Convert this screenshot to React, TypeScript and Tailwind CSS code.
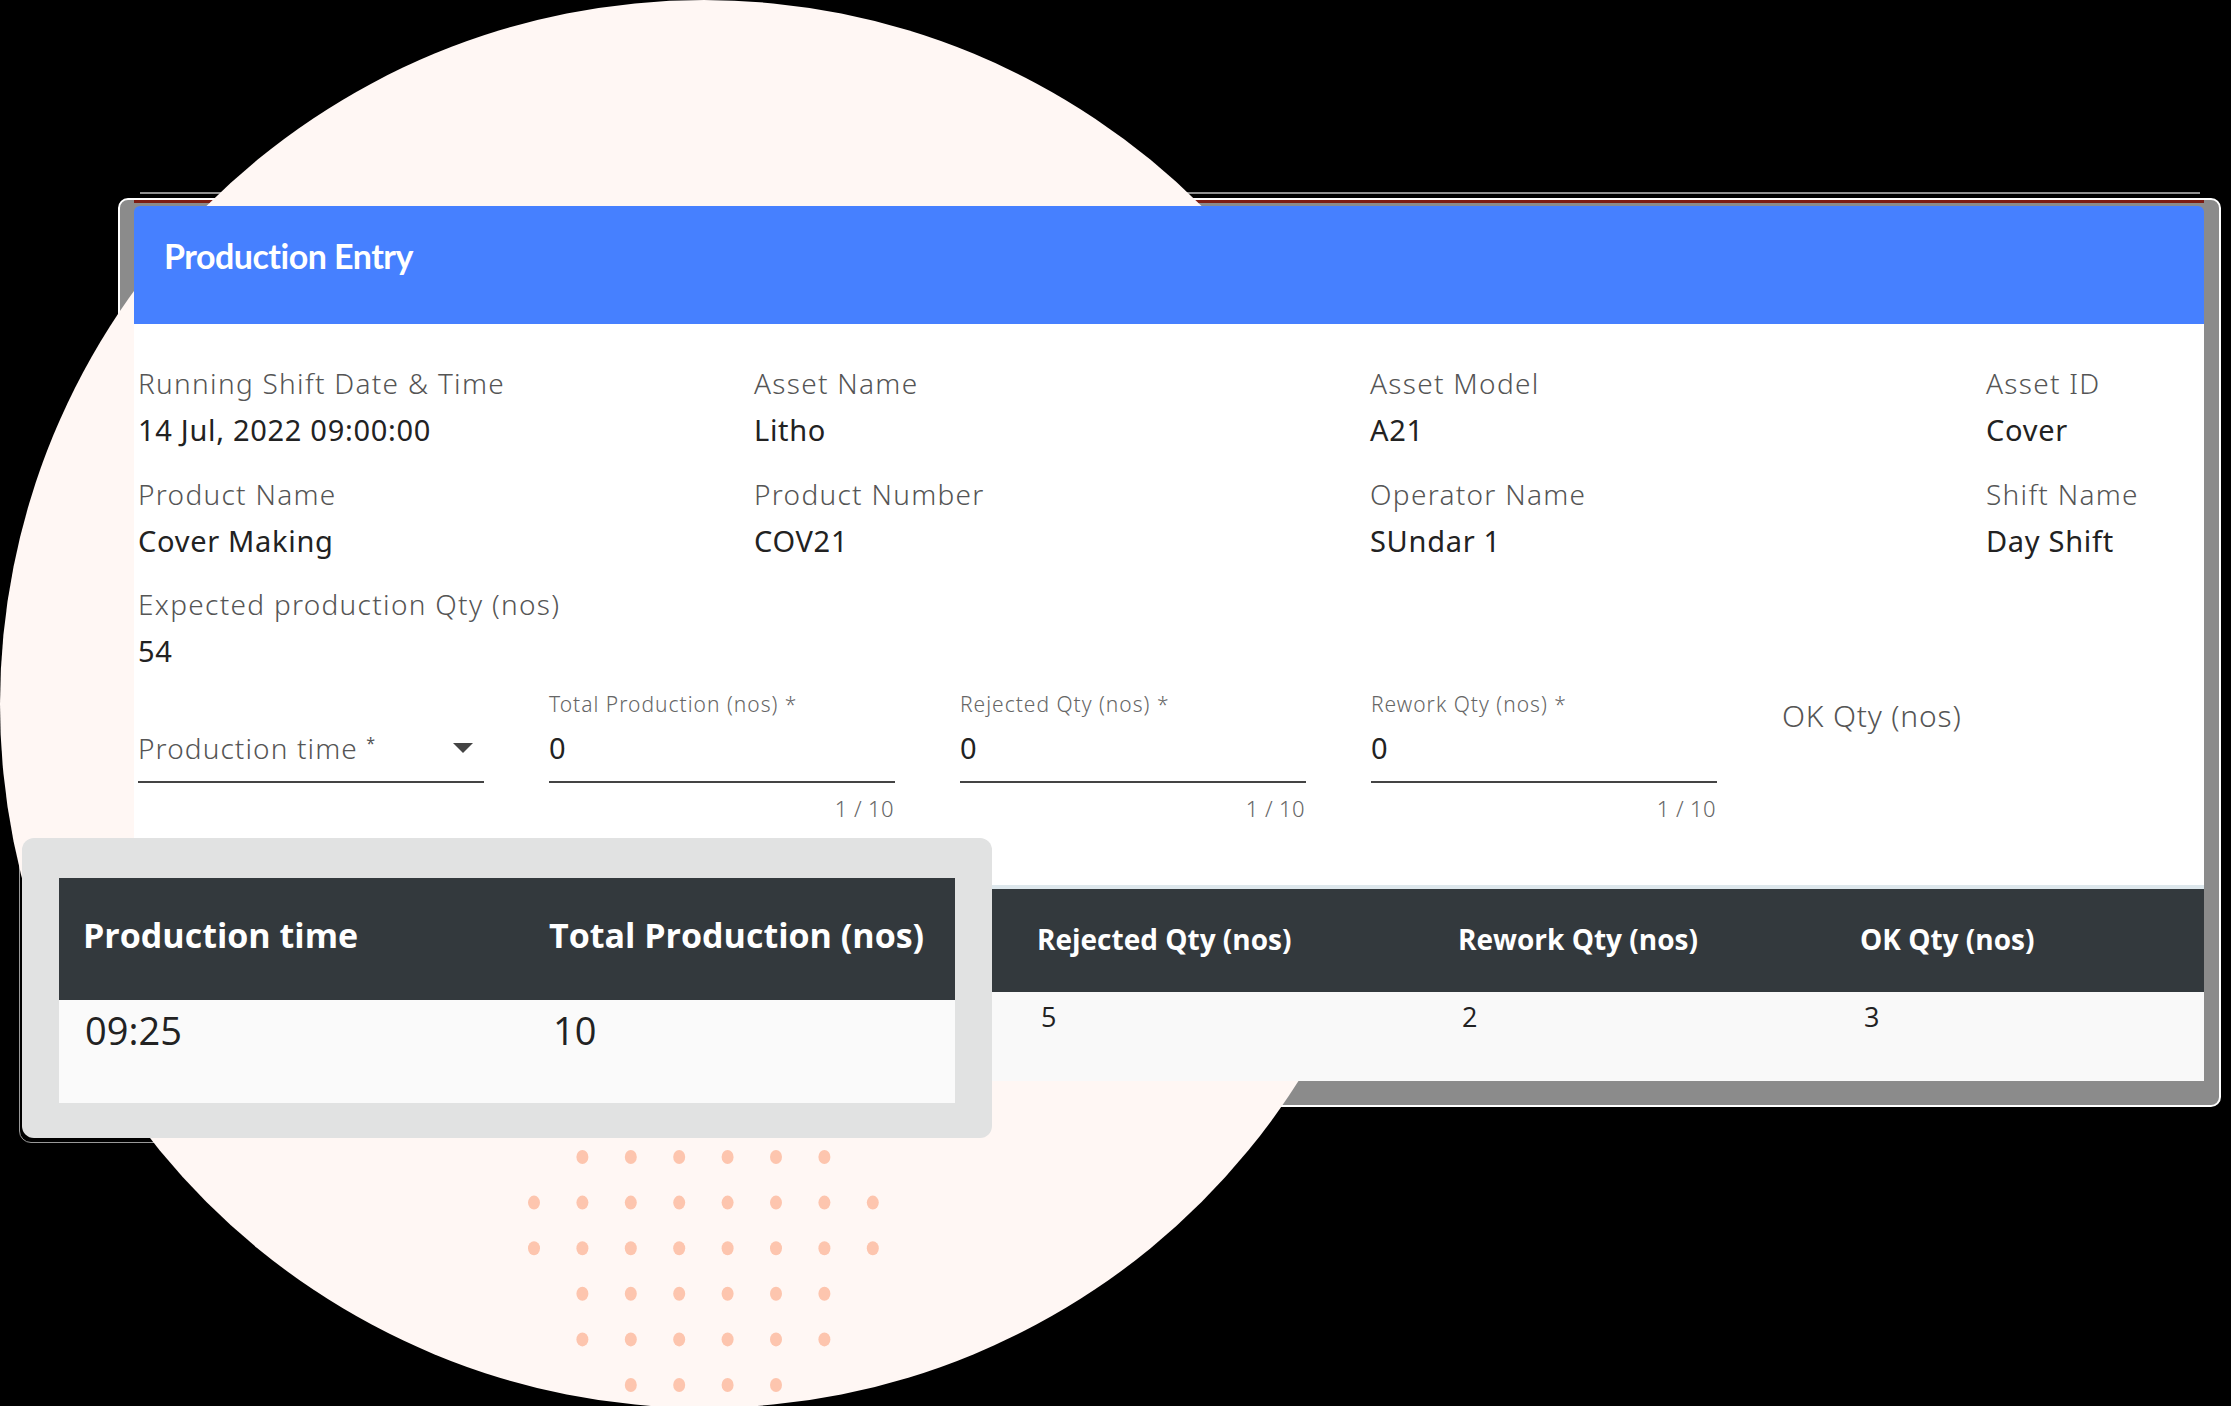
const infoRows = [
  [
    { label: 'Running Shift Date & Time', value: '14 Jul, 2022 09:00:00' },
    { label: 'Asset Name', value: 'Litho' },
    { label: 'Asset Model', value: 'A21' },
    { label: 'Asset ID', value: 'Cover' },
  ],
  [
    { label: 'Product Name', value: 'Cover Making' },
    { label: 'Product Number', value: 'COV21' },
    { label: 'Operator Name', value: 'SUndar 1' },
    { label: 'Shift Name', value: 'Day Shift' },
  ],
  [{ label: 'Expected production Qty (nos)', value: '54' }],
];

const qtyFields = ['Total Production (nos) *', 'Rejected Qty (nos) *', 'Rework Qty (nos) *'];

// dot pattern: first column index and dot count for each row
const dotRows = [
  { start: 1, count: 6 },
  { start: 0, count: 8 },
  { start: 0, count: 8 },
  { start: 1, count: 6 },
  { start: 1, count: 6 },
  { start: 2, count: 4 },
];

const Dots = () => (
  <svg className="absolute left-[524px] top-[1146px]" width="360" height="250" viewBox="0 0 360 250">
    {dotRows.map((row, r) =>
      Array.from({ length: row.count }).map((_, c) => (
        <ellipse key={`${r}-${c}`} cx={10 + (row.start + c) * 48.4} cy={11 + r * 45.6} rx="6" ry="7" fill="#fdc5ae" />
      )),
    )}
  </svg>
);

const App = () => {
  return (
    <div className="relative w-[2231px] h-[1406px] overflow-hidden bg-black font-['Noto_Sans',sans-serif]">
      {/* Leftover frame edges that sit behind the circle */}
      <div className="absolute left-[140px] top-[192px] w-[2060px] h-[2px] bg-[#8f8f8f]" />
      <div className="absolute left-[118px] top-[198px] w-[2103px] h-[909px] rounded-[10px] border-2 border-white bg-[#8b8b8b]" />
      <div className="absolute left-[134px] top-[200px] w-[2070px] h-[3px] bg-[#7d1c12]" />
      <div className="absolute left-[19px] top-[838px] w-[300px] h-[305px] rounded-[12px] border border-[#999] bg-black" />

      {/* Background circle */}
      <div className="absolute left-0 top-0 w-[1408px] h-[1408px] rounded-full bg-[#fff7f4]" />
      <Dots />

      {/* Production entry card */}
      <div className="relative ml-[134px] pt-[206px] w-[2070px]">
        <div className="h-[118px] rounded-t-[6px] bg-[#4680ff] pl-[30px] pt-[30px]">
          <h1 className="text-[34px] leading-[40px] font-bold tracking-[-0.5px] text-white font-['Lato',sans-serif]">Production Entry</h1>
        </div>

        <div className="bg-white pt-[36px]">
          <div className="flex flex-col gap-[17.5px] pl-[4px]">
            {infoRows.map((row, i) => (
              <div key={i} className="grid grid-cols-[616px_616px_616px_1fr]">
                {row.map((item) => (
                  <div key={item.label}>
                    <div className="text-[28px] leading-[47px] font-light tracking-[1.3px] text-[#555]">{item.label}</div>
                    <div className="text-[29px] leading-[46px] tracking-[0.7px] text-[#222]">{item.value}</div>
                  </div>
                ))}
              </div>
            ))}
          </div>

          {/* Entry form */}
          <div className="mt-[20px] ml-[4px] flex gap-[65px]">
            <div className="w-[346px]">
              <div className="h-[20px]" />
              <div className="h-[69px] flex items-center justify-between border-b-2 border-[#444] pr-[11px]">
                <span className="text-[28px] font-light tracking-[1.1px] text-[#555]">
                  Production time <span className="align-super text-[16px] font-normal">*</span>
                </span>
                <span className="w-0 h-0 border-x-[10px] border-t-[10px] border-x-transparent border-t-[#444]" />
              </div>
            </div>
            {qtyFields.map((label) => (
              <div key={label} className="w-[346px]">
                <div className="h-[20px] text-[21px] leading-[20px] font-light tracking-[1px] text-[#666]">{label}</div>
                <div className="h-[69px] flex items-center border-b-2 border-[#444] text-[29px] text-[#222]">0</div>
                <div className="mt-[13px] pr-[1px] text-right text-[22px] leading-[24px] font-light tracking-[0.4px] text-[#666]">1 / 10</div>
              </div>
            ))}
            <div className="text-[30px] leading-[44px] font-light tracking-[0.8px] text-[#555]">OK Qty (nos)</div>
          </div>

          {/* Results table */}
          <div className="mt-[65px] border-t-4 border-[#dde7ec]">
            <div className="h-[103px] grid grid-cols-[421px_402px_1fr] items-center bg-[#33393d] pl-[903px] pb-[3px] text-[28px] font-bold text-white font-['Open_Sans',sans-serif]">
              <div>Rejected Qty (nos)</div>
              <div>Rework Qty (nos)</div>
              <div>OK Qty (nos)</div>
            </div>
            <div className="h-[89px] grid grid-cols-[421px_402px_1fr] bg-[#f9f9f9] pl-[907px] pt-[7px] text-[27px] leading-[36px] text-[#222] font-['Open_Sans',sans-serif]">
              <div>5</div>
              <div>2</div>
              <div>3</div>
            </div>
          </div>
        </div>
      </div>

      {/* Zoomed table callout */}
      <div className="absolute left-[22px] top-[838px] w-[970px] h-[300px] rounded-[12px] bg-[#e1e2e2] px-[37px] pt-[40px]">
        <div className="h-[122px] grid grid-cols-[466px_1fr] items-center bg-[#33393d] pl-[24px] pb-[8px] text-[34px] font-bold text-white font-['Open_Sans',sans-serif]">
          <div>Production time</div>
          <div>Total Production (nos)</div>
        </div>
        <div className="h-[103px] grid grid-cols-[468px_1fr] bg-[#fafafa] pl-[26px] pt-[8px] text-[38px] leading-[44px] text-[#222] font-['Open_Sans',sans-serif]">
          <div>09:25</div>
          <div>10</div>
        </div>
      </div>
    </div>
  );
};

export default App;
